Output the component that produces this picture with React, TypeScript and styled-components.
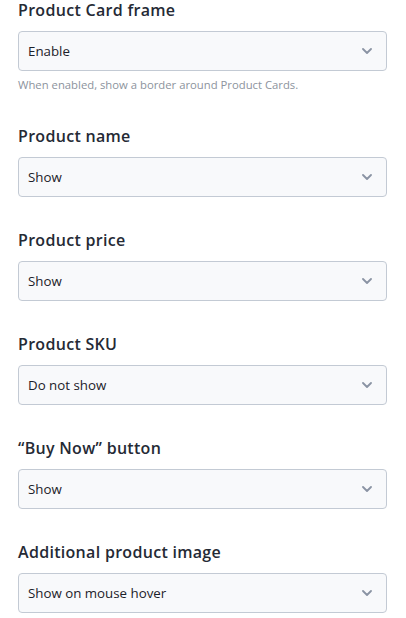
import styled, { createGlobalStyle } from "styled-components";

const GlobalStyle = createGlobalStyle`
    body {
        margin: 0;
        background: #ffffff;
    }
`

type Field = {
    title: string;
    value: string;
    hint?: string;
};

const fields: Field[] = [
    {title: "Product Card frame", value: "Enable", hint: "When enabled, show a border around Product Cards."},
    {title: "Product name", value: "Show"},
    {title: "Product price", value: "Show"},
    {title: "Product SKU", value: "Do not show"},
    {title: "\u201CBuy Now\u201D button", value: "Show"},
    {title: "Additional product image", value: "Show on mouse hover"},
];

const Chevron = () => (
    <svg width="10" height="6" viewBox="0 0 10 6" fill="none">
        <path d="M1 1l4 4 4-4" stroke="#8a93a3" strokeWidth="1.8" strokeLinecap="round" strokeLinejoin="round"/>
    </svg>
);

export default function App() {
    return (
        <>
            <GlobalStyle/>
            <Panel>
                {fields.map((f) => (
                    <Section key={f.title}>
                        <Title>{f.title}</Title>
                        <Select>
                            <Value>{f.value}</Value>
                            <Chevron/>
                        </Select>
                        {f.hint && <Hint>{f.hint}</Hint>}
                    </Section>
                ))}
            </Panel>
        </>
    );
}

const Panel = styled.div`
    width: 406px;
    box-sizing: border-box;
    padding: 0 19px 0 18px;
    display: flex;
    flex-direction: column;
    gap: 33px;
`

const Section = styled.div`
    display: flex;
    flex-direction: column;
`

const Title = styled.div`
    font-family: "Open Sans", "Noto Sans", sans-serif;
    font-weight: 600;
    font-size: 16px;
    letter-spacing: 0.3px;
    line-height: 20px;
    color: #252a35;
    margin-bottom: 11px;
`

const Select = styled.div`
    height: 40px;
    box-sizing: border-box;
    border: 1px solid #c3cad4;
    border-radius: 4px;
    background: #f8f9fb;
    display: flex;
    align-items: center;
    justify-content: space-between;
    padding: 0 14px 0 9px;
`

const Value = styled.span`
    font-family: "Open Sans", "Noto Sans", sans-serif;
    font-size: 13.3px;
    color: #1c2129;
`

const Hint = styled.div`
    font-family: "Open Sans", "Noto Sans", sans-serif;
    font-size: 11.3px;
    line-height: 16px;
    color: #8c939d;
    margin-top: 6px;
`
